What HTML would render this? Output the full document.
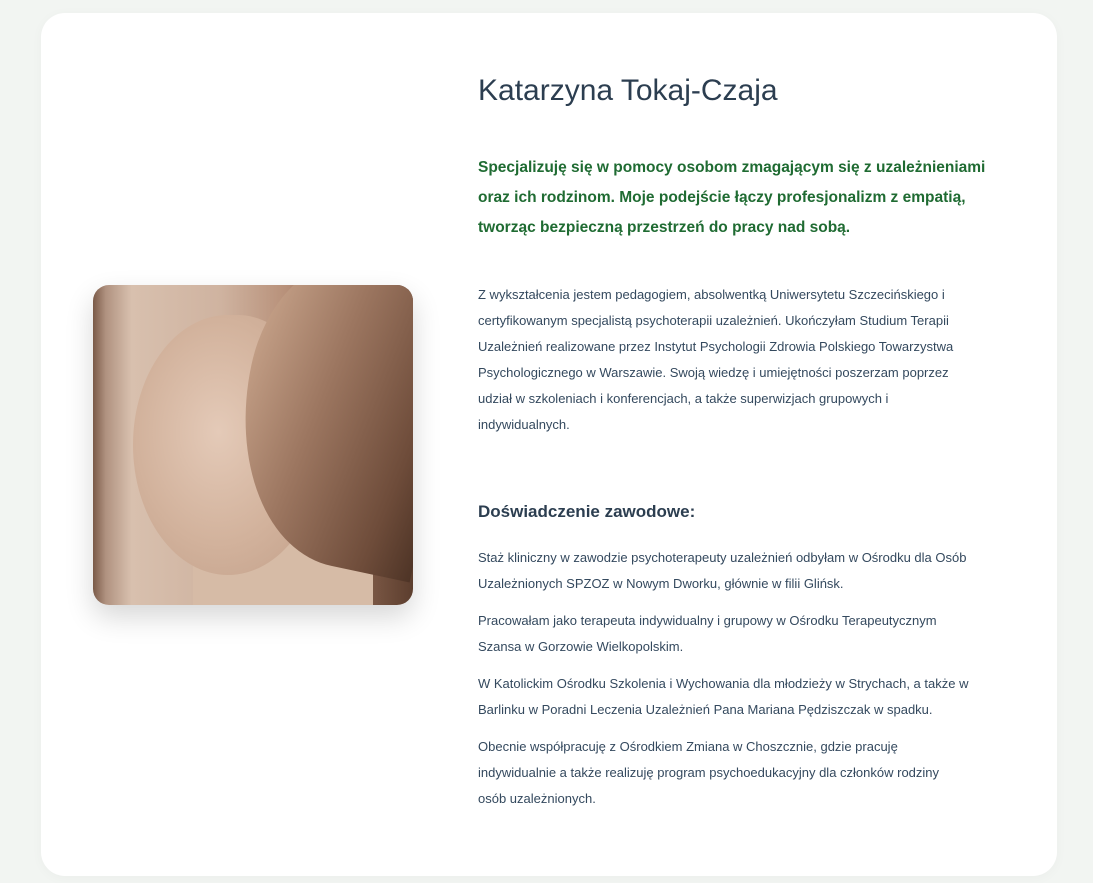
<!DOCTYPE html>
<html><head><meta charset="utf-8"><style>
html,body{margin:0;padding:0}
body{width:1093px;height:883px;background:#f2f5f2;font-family:"Liberation Sans",sans-serif;position:relative;overflow:hidden}
.card{position:absolute;left:41px;top:13px;width:1016px;height:863px;background:#fff;border-radius:24px;box-shadow:0 2px 12px rgba(0,0,0,.03)}
.photo{position:absolute;left:93px;top:285px;width:320px;height:320px;border-radius:16px;overflow:hidden;box-shadow:0 12px 28px rgba(0,0,0,.16);
background:linear-gradient(90deg,#7a5a48 0,#b09280 4%,#d8c0ae 12%,#cfb3a0 40%,#b8917a 60%,#8a6450 80%,#5c3e2e 100%)}
.photo .face{position:absolute;left:40px;top:30px;width:190px;height:260px;border-radius:50% 45% 50% 50%;background:radial-gradient(ellipse at 45% 45%,#e4cab8 0,#d2b29c 55%,#c09e88 100%)}
.photo .hair{position:absolute;left:150px;top:-20px;width:200px;height:300px;border-radius:40% 0 0 60%;background:linear-gradient(100deg,#c9a58c 0,#9c7660 40%,#6e4c3a 80%,#4e3426 100%);transform:rotate(12deg)}
.photo .neck{position:absolute;left:100px;top:250px;width:180px;height:100px;background:#d6bba6}
.col{position:absolute;left:478px;top:0;width:560px;color:#2c3e50;white-space:nowrap}
h1{position:absolute;top:74px;margin:0;font-size:30px;font-weight:normal;color:#2c3e50}
.lead{position:absolute;top:153px;margin:0;font-size:15.5px;font-weight:bold;line-height:30px;color:#1f6b32}
.body{position:absolute;top:282px;margin:0;font-size:13px;line-height:26px;color:#34495e}
h2{position:absolute;top:502px;margin:0;font-size:17px;font-weight:bold;color:#2c3e50}
.exp{position:absolute;top:545px;font-size:13px;line-height:26px;color:#34495e}
.exp p{margin:0 0 11px}
</style></head><body>
<div class="card"></div>
<div class="photo"><div class="neck"></div><div class="face"></div><div class="hair"></div></div>
<div class="col">
<h1>Katarzyna Tokaj-Czaja</h1>
<p class="lead">Specjalizuję się w pomocy osobom zmagającym się z uzależnieniami<br>oraz ich rodzinom. Moje podejście łączy profesjonalizm z empatią,<br>tworząc bezpieczną przestrzeń do pracy nad sobą.</p>
<p class="body">Z wykształcenia jestem pedagogiem, absolwentką Uniwersytetu Szczecińskiego i<br>certyfikowanym specjalistą psychoterapii uzależnień. Ukończyłam Studium Terapii<br>Uzależnień realizowane przez Instytut Psychologii Zdrowia Polskiego Towarzystwa<br>Psychologicznego w Warszawie. Swoją wiedzę i umiejętności poszerzam poprzez<br>udział w szkoleniach i konferencjach, a także superwizjach grupowych i<br>indywidualnych.</p>
<h2>Doświadczenie zawodowe:</h2>
<div class="exp">
<p>Staż kliniczny w zawodzie psychoterapeuty uzależnień odbyłam w Ośrodku dla Osób<br>Uzależnionych SPZOZ w Nowym Dworku, głównie w filii Glińsk.</p>
<p>Pracowałam jako terapeuta indywidualny i grupowy w Ośrodku Terapeutycznym<br>Szansa w Gorzowie Wielkopolskim.</p>
<p>W Katolickim Ośrodku Szkolenia i Wychowania dla młodzieży w Strychach, a także w<br>Barlinku w Poradni Leczenia Uzależnień Pana Mariana Pędziszczak w spadku.</p>
<p>Obecnie współpracuję z Ośrodkiem Zmiana w Choszcznie, gdzie pracuję<br>indywidualnie a także realizuję program psychoedukacyjny dla członków rodziny<br>osób uzależnionych.</p>
</div>
</div>
</body></html>
